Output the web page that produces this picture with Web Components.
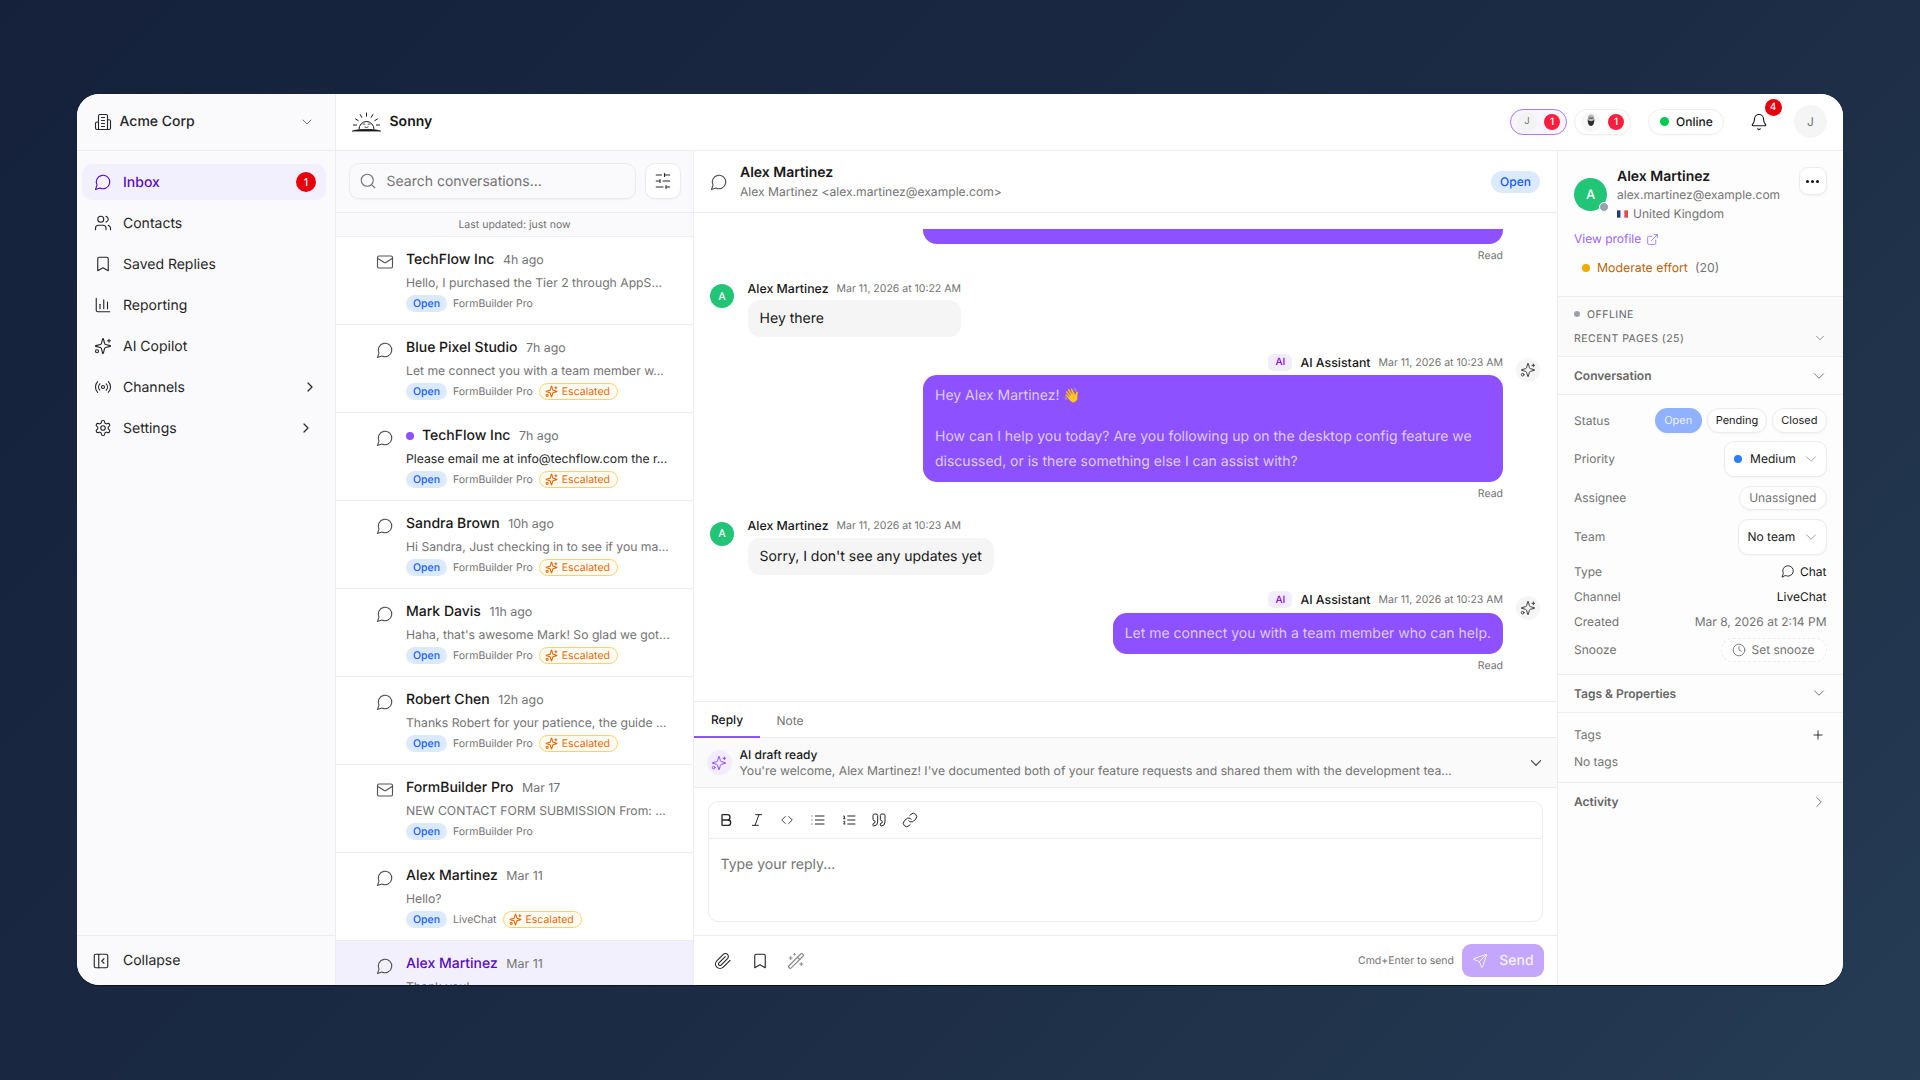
<!DOCTYPE html>
<html>
<head>
<meta charset="utf-8">
<title>Sonny</title>
<style>
    html, body { margin: 0; height: 100%; }
    body {
        box-sizing: border-box;
        height: 1080px;
        padding: 94px 77px 95px;
        overflow: hidden;
        font-family: Inter, "Liberation Sans", sans-serif;
        text-rendering: geometricPrecision;
        color: #171717;
        background: linear-gradient(135deg, #15213a 0%, #1b2b43 55%, #253c54 100%);
    }
</style>
</head>
<body>
<app-shell>
    <side-nav slot="nav"></side-nav>
    <top-bar slot="top"></top-bar>
    <conv-list slot="list"></conv-list>
    <chat-panel slot="chat"></chat-panel>
    <detail-panel slot="detail"></detail-panel>
</app-shell>

<script>
const ICONS = {
    chat: '<path d="M7.9 20A9 9 0 1 0 4 16.1L2 22Z"/>',
    mail: '<rect x="2" y="4" width="20" height="16" rx="2"/><path d="m22 7-8.97 5.7a1.94 1.94 0 0 1-2.06 0L2 7"/>',
    building: '<path d="M6 22V4a2 2 0 0 1 2-2h8a2 2 0 0 1 2 2v18Z"/><path d="M6 12H4a2 2 0 0 0-2 2v6a2 2 0 0 0 2 2h2"/><path d="M18 9h2a2 2 0 0 1 2 2v9a2 2 0 0 1-2 2h-2"/><path d="M10 6h4M10 10h4M10 14h4M10 18h4"/>',
    users: '<path d="M16 21v-2a4 4 0 0 0-4-4H6a4 4 0 0 0-4 4v2"/><circle cx="9" cy="7" r="4"/><path d="M22 21v-2a4 4 0 0 0-3-3.87"/><path d="M16 3.13a4 4 0 0 1 0 7.75"/>',
    bookmark: '<path d="m19 21-7-4-7 4V5a2 2 0 0 1 2-2h10a2 2 0 0 1 2 2v16z"/>',
    chart: '<path d="M3 3v16a2 2 0 0 0 2 2h16"/><path d="M8 17v-6"/><path d="M13 17V5"/><path d="M18 17v-9"/>',
    sparkles: '<path d="M9.937 15.5A2 2 0 0 0 8.5 14.063l-6.135-1.582a.5.5 0 0 1 0-.962L8.5 9.936A2 2 0 0 0 9.937 8.5l1.582-6.135a.5.5 0 0 1 .963 0L14.063 8.5A2 2 0 0 0 15.5 9.937l6.135 1.581a.5.5 0 0 1 0 .964L15.5 14.063a2 2 0 0 0-1.437 1.437l-1.582 6.135a.5.5 0 0 1-.963 0z"/><path d="M20 3v4M22 5h-4"/><circle cx="4" cy="19" r="2"/>',
    radio: '<path d="M4.9 19.1C1 15.2 1 8.8 4.9 4.9"/><path d="M7.8 16.2c-2.3-2.3-2.3-6.1 0-8.5"/><circle cx="12" cy="12" r="2"/><path d="M16.2 7.8c2.3 2.3 2.3 6.1 0 8.5"/><path d="M19.1 4.9C23 8.8 23 15.1 19.1 19"/>',
    settings: '<path d="M12.22 2h-.44a2 2 0 0 0-2 2v.18a2 2 0 0 1-1 1.73l-.43.25a2 2 0 0 1-2 0l-.15-.08a2 2 0 0 0-2.73.73l-.22.38a2 2 0 0 0 .73 2.73l.15.1a2 2 0 0 1 1 1.72v.51a2 2 0 0 1-1 1.74l-.15.09a2 2 0 0 0-.73 2.73l.22.38a2 2 0 0 0 2.73.73l.15-.08a2 2 0 0 1 2 0l.43.25a2 2 0 0 1 1 1.73V20a2 2 0 0 0 2 2h.44a2 2 0 0 0 2-2v-.18a2 2 0 0 1 1-1.73l.43-.25a2 2 0 0 1 2 0l.15.08a2 2 0 0 0 2.73-.73l.22-.39a2 2 0 0 0-.73-2.73l-.15-.08a2 2 0 0 1-1-1.74v-.5a2 2 0 0 1 1-1.74l.15-.09a2 2 0 0 0 .73-2.73l-.22-.38a2 2 0 0 0-2.73-.73l-.15.08a2 2 0 0 1-2 0l-.43-.25a2 2 0 0 1-1-1.73V4a2 2 0 0 0-2-2z"/><circle cx="12" cy="12" r="3"/>',
    right: '<path d="m9 18 6-6-6-6"/>',
    down: '<path d="m6 9 6 6 6-6"/>',
    search: '<circle cx="11" cy="11" r="8"/><path d="m21 21-4.3-4.3"/>',
    sliders: '<path d="M21 4h-7M10 4H3M21 12h-9M8 12H3M21 20h-5M12 20H3M14 2v4M8 10v4M16 18v4"/>',
    collapse: '<rect x="3" y="3" width="18" height="18" rx="2"/><path d="M9 3v18"/><path d="m16 15-3-3 3-3"/>',
    bold: '<path d="M6 12h9a4 4 0 0 1 0 8H7a1 1 0 0 1-1-1V5a1 1 0 0 1 1-1h7a4 4 0 0 1 0 8"/>',
    italic: '<path d="M19 4h-9M14 20H5M15 4 9 20"/>',
    code: '<path d="m9 6-6 6 6 6M15 6l6 6-6 6"/>',
    list: '<path d="M3 6h.01M3 12h.01M3 18h.01M8 6h13M8 12h13M8 18h13"/>',
    ordered: '<path d="M10 6h11M10 12h11M10 18h11M4 6h1v4M4 10h2M6 18H4c0-1 2-2 2-3s-1-1.5-2-1"/>',
    quote: '<path d="M16 3a2 2 0 0 0-2 2v6a2 2 0 0 0 2 2 1 1 0 0 1 1 1v1a2 2 0 0 1-2 2 1 1 0 0 0-1 1v2a1 1 0 0 0 1 1 6 6 0 0 0 6-6V5a2 2 0 0 0-2-2z"/><path d="M5 3a2 2 0 0 0-2 2v6a2 2 0 0 0 2 2 1 1 0 0 1 1 1v1a2 2 0 0 1-2 2 1 1 0 0 0-1 1v2a1 1 0 0 0 1 1 6 6 0 0 0 6-6V5a2 2 0 0 0-2-2z"/>',
    link: '<path d="M10 13a5 5 0 0 0 7.54.54l3-3a5 5 0 0 0-7.07-7.07l-1.72 1.71"/><path d="M14 11a5 5 0 0 0-7.54-.54l-3 3a5 5 0 0 0 7.07 7.07l1.71-1.71"/>',
    clip: '<path d="m21.44 11.05-9.19 9.19a6 6 0 0 1-8.49-8.49l8.57-8.57A4 4 0 1 1 18 8.84l-8.59 8.57a2 2 0 0 1-2.83-2.83l8.49-8.48"/>',
    wand: '<path d="m21.64 3.64-1.28-1.28a1.21 1.21 0 0 0-1.72 0L2.36 18.64a1.21 1.21 0 0 0 0 1.72l1.28 1.28a1.2 1.2 0 0 0 1.72 0L21.64 5.36a1.2 1.2 0 0 0 0-1.72"/><path d="m14 7 3 3M5 6v4M19 14v4M10 2v2M7 8H3M21 16h-4M11 3H9"/>',
    send: '<path d="M14.536 21.686a.5.5 0 0 0 .937-.024l6.5-19a.496.496 0 0 0-.635-.635l-19 6.5a.5.5 0 0 0-.024.937l7.93 3.18a2 2 0 0 1 1.112 1.11z"/><path d="m21.854 2.147-10.94 10.939"/>',
    bell: '<path d="M10.268 21a2 2 0 0 0 3.464 0"/><path d="M3.262 15.326A1 1 0 0 0 4 17h16a1 1 0 0 0 .74-1.673C19.41 13.956 18 12.499 18 8A6 6 0 0 0 6 8c0 4.499-1.411 5.956-2.738 7.326"/>',
    external: '<path d="M15 3h6v6M10 14 21 3M18 13v6a2 2 0 0 1-2 2H5a2 2 0 0 1-2-2V8a2 2 0 0 1 2-2h6"/>',
    clock: '<circle cx="12" cy="12" r="10"/><path d="M12 6v6l4 2"/>',
    plus: '<path d="M5 12h14M12 5v14"/>'
};

function define(tag, render) {
    customElements.define(tag, class extends HTMLElement {
        connectedCallback() {
            if (this.shadowRoot) return;
            this.attachShadow({mode: 'open'});
            this.shadowRoot.innerHTML = render(this);
        }
    });
}

define('ui-icon', (el) => {
    const size = el.getAttribute('size') || 18;
    const sw = el.getAttribute('sw') || 1.5;
    return `<style>:host{display:inline-flex;flex:none}svg{display:block}</style>
    <svg width="${size}" height="${size}" viewBox="0 0 24 24" fill="none" stroke="currentColor" stroke-width="${sw}" stroke-linecap="round" stroke-linejoin="round">${ICONS[el.getAttribute('name')]}</svg>`;
});

define('app-shell', () => `
    <style>
        :host {
            display: grid;
            grid-template-columns: 259px 1fr;
            grid-template-rows: 57px 1fr;
            width: 1766px;
            height: 891px;
            border-radius: 22px;
            overflow: hidden;
            background: #fff;
            box-shadow: 0 1px 0 #0b1220;
        }
        .nav { grid-row: 1 / 3; min-height: 0; display: flex; }
        .main { display: grid; grid-template-columns: 357px 864px 286px; min-height: 0; }
    </style>
    <div class="nav"><slot name="nav"></slot></div>
    <slot name="top"></slot>
    <div class="main">
        <slot name="list"></slot>
        <slot name="chat"></slot>
        <slot name="detail"></slot>
    </div>
`);

define('nav-item', (el) => {
    const active = el.hasAttribute('active');
    const offset = el.getAttribute('chev-offset') || 0;
    return `
    <style>
        :host { display: block; }
        .item {
            height: 36px;
            box-sizing: border-box;
            display: flex;
            align-items: center;
            gap: 11.5px;
            padding: 0 10px 0 11.5px;
            border-radius: 10px;
            font-size: 14px;
            font-weight: ${active ? 500 : 400};
            color: ${active ? '#5a0cc0' : '#262626'};
            background: ${active ? '#f3f0fd' : 'transparent'};
        }
        .label { flex: 1; }
        .badge {
            width: 20px; height: 20px; border-radius: 50%;
            background: #e7000b; color: #fff;
            font-size: 10.5px; display: flex; align-items: center; justify-content: center;
        }
        ui-icon.chev { margin-right: ${-2 + Number(offset)}px; }
    </style>
    <div class="item">
        <ui-icon name="${el.getAttribute('icon')}"></ui-icon>
        <span class="label"><slot></slot></span>
        ${el.hasAttribute('badge') ? `<span class="badge">${el.getAttribute('badge')}</span>` : ''}
        ${el.hasAttribute('chev') ? '<ui-icon class="chev" name="right" size="16" sw="1.8"></ui-icon>' : ''}
    </div>`;
});

define('side-nav', () => `
    <style>
        :host {
            width: 259px;
            box-sizing: border-box;
            display: flex;
            flex-direction: column;
            background: #fafafc;
            border-right: 1px solid #ededed;
        }
        .org {
            height: 57px; box-sizing: border-box; flex: none;
            display: flex; align-items: center; gap: 8px;
            padding: 0 20px 1px 16.5px;
            border-bottom: 1px solid #ededed;
            font-size: 14px; font-weight: 500; color: #262626;
        }
        .org span { flex: 1; }
        .org .chev { color: #737373; }
        nav { display: flex; flex-direction: column; gap: 5px; padding: 13px 9px 0 5px; }
        .foot {
            margin-top: auto; height: 50px; box-sizing: border-box;
            display: flex; align-items: center; gap: 13px;
            padding-left: 15px;
            border-top: 1px solid #ededed;
            font-size: 14px; color: #262626;
        }
    </style>
    <div class="org">
        <ui-icon name="building"></ui-icon>
        <span>Acme Corp</span>
        <ui-icon class="chev" name="down" size="16"></ui-icon>
    </div>
    <nav>
        <nav-item icon="chat" active badge="1">Inbox</nav-item>
        <nav-item icon="users">Contacts</nav-item>
        <nav-item icon="bookmark">Saved Replies</nav-item>
        <nav-item icon="chart">Reporting</nav-item>
        <nav-item icon="sparkles">AI Copilot</nav-item>
        <nav-item icon="radio" chev chev-offset="0">Channels</nav-item>
        <nav-item icon="settings" chev chev-offset="4">Settings</nav-item>
    </nav>
    <div class="foot">
        <ui-icon name="collapse"></ui-icon>
        <span>Collapse</span>
    </div>
`);

define('top-bar', () => `
    <style>
        :host {
            display: flex; align-items: center;
            box-sizing: border-box; height: 57px;
            padding: 0 16px 1px 16px;
            border-bottom: 1px solid #ededed;
            background: #fff;
        }
        .brand { font-size: 14px; font-weight: 600; margin-left: 8.5px; flex: 1; }
        .pill {
            height: 26px; box-sizing: border-box;
            display: flex; align-items: center;
            border: 1px solid #eeeeee; border-radius: 13px;
            box-shadow: 0 1px 2px rgba(0,0,0,.03);
        }
        .agent { width: 57px; padding-left: 6px; gap: 7px; margin-right: 7px; }
        .agent.on { border-color: #a57dfb; background: #f8f5ff; }
        .avatar {
            width: 20px; height: 20px; border-radius: 50%;
            background: #f3f3f3; color: #737373; font-size: 9.5px;
            display: flex; align-items: center; justify-content: center; flex: none;
        }
        .count {
            width: 16px; height: 16px; border-radius: 50%;
            background: #f81e3c; color: #fff; font-size: 10px; font-weight: 500;
            display: flex; align-items: center; justify-content: center; flex: none;
        }
        .online { width: 76px; margin-left: 10px; padding-left: 11px; gap: 7px; font-size: 12px; font-weight: 500; }
        .online i { width: 9px; height: 9px; border-radius: 50%; background: #00c950; }
        .bell { position: relative; display: flex; margin: 0 26px; }
        .bell b {
            position: absolute; left: 14.5px; top: -14px;
            width: 17px; height: 17px; border-radius: 50%;
            background: #e7000b; color: #fff; font-size: 10px; font-weight: 500;
            display: flex; align-items: center; justify-content: center;
        }
        .me {
            width: 33px; height: 33px; border-radius: 50%;
            background: #f5f5f5; color: #737373; font-size: 12px;
            display: flex; align-items: center; justify-content: center;
        }
    </style>
    <svg width="29" height="20" viewBox="0 0 29 20" fill="none" stroke="#171717" stroke-width="1" stroke-linecap="round">
        <path d="M7 17a7.5 7.5 0 0 1 15 0"/>
        <path d="M14.5 1v3.2M8.2 2.6l1.6 2.8M20.8 2.6l-1.6 2.8M3.6 7l2.6 1.6M25.4 7l-2.6 1.6M1.5 13h3M24.5 13h3"/>
        <path d="M11 12.2q1-.9 2 0M16 12.2q1-.9 2 0M12.8 15q1.7 1.2 3.4 0" stroke-width=".8"/>
        <path d="M.5 19c4-2.2 24-2.2 28 0z" fill="#171717" stroke-width=".6"/>
    </svg>
    <span class="brand">Sonny</span>
    <div class="pill agent on"><span class="avatar">J</span><span class="count">1</span></div>
    <div class="pill agent">
        <span class="avatar" style="background:#f7f7f7">
            <svg width="12" height="15" viewBox="0 0 12 15"><ellipse cx="6" cy="4" rx="3.2" ry="3.4" fill="#b9b9b9"/><path d="M2.6 5c0 4 1 7 3.4 7s3.4-3 3.4-7C8 8 4 8 2.6 5z" fill="#2b2b2b"/><rect x="3.6" y="3.6" width="4.8" height="1" fill="#444"/></svg>
        </span>
        <span class="count">1</span>
    </div>
    <div class="pill online"><i></i>Online</div>
    <div class="bell"><ui-icon name="bell"></ui-icon><b>4</b></div>
    <div class="me">J</div>
`);

define('status-chip', () => `
    <style>
        :host {
            display: inline-flex; align-items: center; justify-content: center;
            height: 17px; width: 41px; border-radius: 9px;
            background: #dbeafe; color: #155dfc;
            font-size: 10.5px; font-weight: 500; flex: none;
        }
    </style>
    <slot></slot>
`);

define('escalated-chip', () => `
    <style>
        :host {
            display: inline-flex; align-items: center; gap: 4px;
            box-sizing: border-box;
            height: 17px; width: 79px; padding: 0 0 0 5px; border-radius: 9px;
            border: 1px solid #fdd163; background: #fffdf5; color: #e86a00;
            font-size: 10.5px; font-weight: 400; flex: none;
        }
    </style>
    <ui-icon name="sparkles" size="13" sw="2"></ui-icon><slot></slot>
`);

define('conv-item', (el) => {
    const selected = el.hasAttribute('selected');
    const unread = el.hasAttribute('unread');
    return `
    <style>
        :host {
            display: flex; flex: none; box-sizing: border-box;
            height: 88px; padding: 13.5px 0 0 40px;
            border-bottom: ${selected ? 0 : 1}px solid #ededed;
            background: ${selected ? '#f3f0fd' : '#fff'};
        }
        .ic { color: #525252; margin: 2.5px 12px 0 0; }
        .body { min-width: 0; flex: 1; }
        .head { display: flex; align-items: center; height: 18px; gap: 8.5px; }
        .dot { width: 8px; height: 8px; border-radius: 50%; background: #8e51ff; margin-right: -.5px; }
        .name { font-size: 14px; font-weight: 500; color: ${selected ? '#5a0cc0' : '#171717'}; }
        .time { font-size: 12.4px; color: #737373; }
        .preview { height: 16px; line-height: 16px; margin-top: 6.5px; font-size: 12.2px; white-space: nowrap; color: ${unread ? '#262626' : '#737373'}; }
        .tags { display: flex; align-items: center; gap: 6px; margin-top: 4px; height: 17px; }
        .src { font-size: 10.5px; color: #737373; }
    </style>
    <ui-icon class="ic" name="${el.getAttribute('icon') || 'chat'}"></ui-icon>
    <div class="body">
        <div class="head">
            ${unread ? '<span class="dot"></span>' : ''}
            <span class="name">${el.getAttribute('name')}</span>
            <span class="time">${el.getAttribute('time')}</span>
        </div>
        <div class="preview"><slot></slot></div>
        ${el.hasAttribute('source') ? `<div class="tags">
            <status-chip>Open</status-chip>
            <span class="src">${el.getAttribute('source')}</span>
            ${el.hasAttribute('escalated') ? '<escalated-chip>Escalated</escalated-chip>' : ''}
        </div>` : ''}
    </div>`;
});

define('conv-list', () => `
    <style>
        :host { display: flex; flex-direction: column; min-height: 0; overflow: hidden; background: #fff; }
        .search {
            flex: none; height: 62px; box-sizing: border-box;
            display: flex; gap: 9px; padding: 12px 12px 0 12.5px;
            background: #fafafc; border-bottom: 1px solid #ededed;
        }
        .box, .filter {
            height: 36px; box-sizing: border-box;
            border: 1px solid #ececec; border-radius: 10px;
            box-shadow: 0 1px 2px rgba(0,0,0,.04);
            display: flex; align-items: center;
        }
        .box {
            flex: 1; gap: 10px; padding-left: 9px;
            background: #fafafc; color: #737373; font-size: 14px;
        }
        .filter { width: 36px; justify-content: center; background: #fff; color: #262626; flex: none; }
        .updated {
            flex: none; height: 24px; box-sizing: border-box;
            display: flex; align-items: center; justify-content: center;
            font-size: 10.5px; color: #737373;
            background: #fafafc; border-bottom: 1px solid #ededed;
        }
    </style>
    <div class="search">
        <div class="box"><ui-icon name="search"></ui-icon>Search conversations...</div>
        <div class="filter"><ui-icon name="sliders"></ui-icon></div>
    </div>
    <div class="updated">Last updated: just now</div>
    <conv-item icon="mail" name="TechFlow Inc" time="4h ago" source="FormBuilder Pro">Hello, I purchased the Tier 2 through AppS...</conv-item>
    <conv-item name="Blue Pixel Studio" time="7h ago" source="FormBuilder Pro" escalated>Let me connect you with a team member w...</conv-item>
    <conv-item name="TechFlow Inc" time="7h ago" source="FormBuilder Pro" escalated unread>Please email me at info@techflow.com the r...</conv-item>
    <conv-item name="Sandra Brown" time="10h ago" source="FormBuilder Pro" escalated>Hi Sandra, Just checking in to see if you ma...</conv-item>
    <conv-item name="Mark Davis" time="11h ago" source="FormBuilder Pro" escalated>Haha, that's awesome Mark! So glad we got...</conv-item>
    <conv-item name="Robert Chen" time="12h ago" source="FormBuilder Pro" escalated>Thanks Robert for your patience, the guide ...</conv-item>
    <conv-item icon="mail" name="FormBuilder Pro" time="Mar 17" source="FormBuilder Pro">NEW CONTACT FORM SUBMISSION From: ...</conv-item>
    <conv-item name="Alex Martinez" time="Mar 11" source="LiveChat" escalated>Hello?</conv-item>
    <conv-item name="Alex Martinez" time="Mar 11" selected>Thank you!</conv-item>
`);

define('user-msg', (el) => `
    <style>
        :host { display: flex; gap: 13.6px; margin-top: 17px; }
        .avatar {
            width: 24px; height: 24px; margin-top: 4px; border-radius: 50%;
            background: #22c476; color: #fff; font-size: 10.5px; font-weight: 500;
            display: flex; align-items: center; justify-content: center; flex: none;
        }
        .col { display: flex; flex-direction: column; width: fit-content; }
        .meta { height: 16px; display: flex; align-items: center; gap: 8px; white-space: nowrap; }
        .name { font-size: 12.35px; font-weight: 500; }
        .date { font-size: 10.5px; color: #737373; }
        .bubble {
            margin-top: 4px; padding: 0 12px; height: 37px; line-height: 37px;
            background: #f5f5f5; border-radius: 12px; font-size: 14px; color: #171717;
        }
    </style>
    <div class="avatar">A</div>
    <div class="col">
        <div class="meta"><span class="name">Alex Martinez</span><span class="date">${el.getAttribute('date')}</span></div>
        <div class="bubble"><slot></slot></div>
    </div>
`);

define('ai-msg', (el) => `
    <style>
        :host { display: flex; justify-content: flex-end; margin-top: 16px; }
        .col { display: flex; flex-direction: column; align-items: flex-end; }
        .meta { height: 18px; display: flex; align-items: center; gap: 8px; white-space: nowrap; }
        .ai {
            width: 24px; height: 17px; border-radius: 6px; background: #f3ecff; color: #8200db;
            font-size: 10px; font-weight: 500; display: flex; align-items: center; justify-content: center;
        }
        .name { font-size: 12.35px; font-weight: 500; }
        .date { font-size: 10.5px; color: #737373; }
        .bubble {
            margin-top: 4px; padding: 9.25px 12px 7.25px; max-width: 556px; width: ${el.hasAttribute('wide') ? '556px' : 'auto'};
            background: #8e51ff; border-radius: 14px;
            color: #dccbff; font-size: 14px; line-height: 24.5px;
        }
        .read { margin-top: 5px; height: 14px; line-height: 14px; font-size: 10.5px; color: #737373; }
        .spark {
            width: 24px; height: 24px; margin: 5px 0 0 13px; border-radius: 50%;
            background: #f5f5f5; color: #404040;
            display: flex; align-items: center; justify-content: center; flex: none;
        }
    </style>
    <div class="col">
        <div class="meta"><span class="ai">AI</span><span class="name">AI Assistant</span><span class="date">${el.getAttribute('date')}</span></div>
        <div class="bubble"><slot></slot></div>
        <div class="read">Read</div>
    </div>
    <div class="spark"><ui-icon name="sparkles" size="16"></ui-icon></div>
`);

define('chat-panel', () => `
    <style>
        :host { display: flex; flex-direction: column; min-height: 0; border-left: 1px solid #ededed; box-sizing: border-box; background: #fff; overflow: hidden; }
        .head {
            flex: none; height: 62px; box-sizing: border-box;
            display: flex; align-items: center; gap: 12.5px;
            padding: 0 17px 0 15.5px;
            border-bottom: 1px solid #ededed;
        }
        .head ui-icon { color: #525252; }
        .who { flex: 1; }
        .who b { display: block; font-size: 14px; font-weight: 600; line-height: 17px; }
        .who span { display: block; margin-top: 3px; font-size: 12.1px; line-height: 16px; color: #737373; }
        .open { height: 22px; padding: 0 9px; border-radius: 11px; background: #dbeafe; color: #155dfc; font-size: 12px; font-weight: 500; display: flex; align-items: center; }
        .msgs { flex: 1; min-height: 0; padding: 16px 17px 0 16px; overflow: hidden; }
        .cut { margin-left: auto; margin-right: 37px; width: 580px; height: 15px; background: #8e51ff; border-radius: 0 0 14px 14px; }
        .cutread { margin-right: 37px; margin-top: 5px; height: 14px; line-height: 14px; text-align: right; font-size: 10.5px; color: #737373; }
        .msgs p { margin: 0 0 16.5px; }
        .msgs p:last-child { margin: 0; }
        .composer { flex: none; height: 284px; box-sizing: border-box; border-top: 1px solid #ededed; display: flex; flex-direction: column; }
        .tabs { flex: none; height: 36px; box-sizing: border-box; display: flex; align-items: stretch; border-bottom: 1px solid #ededed; font-size: 12px; }
        .tab { display: flex; align-items: center; padding: 0 16.5px; margin-bottom: -1px; color: #737373; }
        .tab.on { color: #171717; font-weight: 500; border-bottom: 2px solid #8e51ff; width: 66px; box-sizing: border-box; padding: 0 0 0 17px; }
        .draft {
            flex: none; height: 50px; box-sizing: border-box;
            display: flex; align-items: center; gap: 8px;
            padding: 0 12px 0 12.5px;
            background: #fafafa; border-bottom: 1px solid #ededed;
        }
        .draft .ic { width: 25px; height: 25px; border-radius: 50%; background: #f3ecff; color: #8e51ff; display: flex; align-items: center; justify-content: center; flex: none; }
        .draft .txt { flex: 1; min-width: 0; font-size: 12px; line-height: 16.5px; padding-top: 1px; }
        .draft b { display: block; font-weight: 500; }
        .draft span { display: block; color: #737373; white-space: nowrap; font-size: 12.2px; }
        .draft ui-icon.chev { color: #525252; }
        .editor {
            flex: none; height: 121px; box-sizing: border-box; margin: 13px 14px 13px 13.5px;
            border: 1px solid #ececec; border-radius: 10px;
        }
        .tools { height: 37px; box-sizing: border-box; display: flex; align-items: center; gap: 6.7px; padding-left: 5.5px; border-bottom: 1px solid #ededed; color: #262626; }
        .tools span { width: 24px; display: flex; justify-content: center; }
        .ph { padding: 17px 12px 0; font-size: 14px; line-height: 17px; color: #737373; }
        .foot { flex: none; height: 50px; box-sizing: border-box; border-top: 1px solid #ededed; display: flex; align-items: center; padding: 0 13px 0 17px; }
        .foot .act { width: 24px; display: flex; justify-content: center; margin-right: 12.7px; color: #262626; }
        .foot .hint { margin-left: auto; font-size: 10.5px; color: #737373; margin-right: 8px; }
        .send {
            width: 82px; height: 33px; border-radius: 9px; background: #c4a7fc; color: #f5f0ff;
            display: flex; align-items: center; justify-content: center; gap: 11px;
            font-size: 14px; font-weight: 500;
        }
    </style>
    <div class="head">
        <ui-icon name="chat"></ui-icon>
        <div class="who"><b>Alex Martinez</b><span>Alex Martinez &lt;alex.martinez@example.com&gt;</span></div>
        <div class="open">Open</div>
    </div>
    <div class="msgs">
        <div class="cut"></div>
        <div class="cutread">Read</div>
        <user-msg date="Mar 11, 2026 at 10:22 AM">Hey there</user-msg>
        <ai-msg date="Mar 11, 2026 at 10:23 AM" wide>
            <p>Hey Alex Martinez! <span>👋</span></p>
            <p>How can I help you today? Are you following up on the desktop config feature we discussed, or is there something else I can assist with?</p>
        </ai-msg>
        <user-msg date="Mar 11, 2026 at 10:23 AM">Sorry, I don't see any updates yet</user-msg>
        <ai-msg date="Mar 11, 2026 at 10:23 AM">Let me connect you with a team member who can help.</ai-msg>
    </div>
    <div class="composer">
        <div class="tabs"><div class="tab on">Reply</div><div class="tab">Note</div></div>
        <div class="draft">
            <div class="ic"><ui-icon name="sparkles" size="16"></ui-icon></div>
            <div class="txt"><b>AI draft ready</b><span>You're welcome, Alex Martinez! I've documented both of your feature requests and shared them with the development tea...</span></div>
            <ui-icon class="chev" name="down" sw="1.6"></ui-icon>
        </div>
        <div class="editor">
            <div class="tools">
                <span><ui-icon name="bold" size="16" sw="2"></ui-icon></span>
                <span><ui-icon name="italic" size="16"></ui-icon></span>
                <span><ui-icon name="code" size="14"></ui-icon></span>
                <span><ui-icon name="list" size="16"></ui-icon></span>
                <span><ui-icon name="ordered" size="16"></ui-icon></span>
                <span><ui-icon name="quote" size="16"></ui-icon></span>
                <span><ui-icon name="link" size="16"></ui-icon></span>
            </div>
            <div class="ph">Type your reply...</div>
        </div>
        <div class="foot">
            <span class="act"><ui-icon name="clip"></ui-icon></span>
            <span class="act"><ui-icon name="bookmark"></ui-icon></span>
            <span class="act" style="color:#8a8a8a"><ui-icon name="wand"></ui-icon></span>
            <span class="hint">Cmd+Enter to send</span>
            <div class="send"><ui-icon name="send" size="16"></ui-icon>Send</div>
        </div>
    </div>
`);

define('detail-row', (el) => `
    <style>
        :host {
            display: flex; align-items: center; justify-content: space-between;
            height: ${el.getAttribute('h') || 17}px; flex: none;
            font-size: 12px; color: #171717;
        }
        .lab { color: #737373; }
        .val { display: flex; align-items: center; gap: 5px; }
    </style>
    <span class="lab">${el.getAttribute('label')}</span>
    <span class="val"><slot></slot></span>
`);

define('section-head', (el) => `
    <style>
        :host {
            display: flex; align-items: center; justify-content: space-between;
            box-sizing: border-box; height: 38px; padding: 0 15px 0 16px;
            border-bottom: ${el.hasAttribute('last') ? 0 : 1}px solid #ededed;
            font-size: 12px; font-weight: 600; color: #666;
        }
        ui-icon { color: #737373; }
    </style>
    <span><slot></slot></span>
    <ui-icon name="${el.getAttribute('chev') || 'down'}" sw="1.3"></ui-icon>
`);

define('pick-chip', (el) => {
    const h = el.getAttribute('h') || 24;
    const kind = el.getAttribute('kind');
    const w = el.getAttribute('w');
    return `
    <style>
        :host {
            display: inline-flex; align-items: center; justify-content: ${w && !el.hasAttribute('start') ? 'center' : 'flex-start'}; gap: 5px;
            box-sizing: border-box; height: ${h}px; border-radius: ${h > 30 ? 10 : 12}px;
            border: 1px ${kind === 'dash' ? 'dashed' : 'solid'} #ececec;
            box-shadow: ${kind === 'dash' ? 'none' : '0 1px 2px rgba(0,0,0,.04)'};
            background: ${kind === 'on' ? '#8fb1ff' : '#fff'};
            color: ${kind === 'on' ? '#eef3ff' : (kind === 'muted' || kind === 'dash' ? '#737373' : '#171717')};
            padding: 0 ${el.getAttribute('pad') || 8}px;
            ${w ? `width: ${w}px;` : ''}
            flex: none;
            white-space: nowrap;
            font-size: ${el.hasAttribute('lg') ? 12 : 11}px;
            ${kind === 'on' ? 'border-color: #8fb1ff;' : ''}
        }
    </style>
    <slot></slot>`;
});

define('detail-panel', () => `
    <style>
        :host { display: flex; flex-direction: column; min-height: 0; border-left: 1px solid #ededed; background: #fdfdfd; overflow: hidden; }
        .profile { flex: none; height: 146px; box-sizing: border-box; padding: 17px 16.5px 0 16px; border-bottom: 1px solid #ededed; }
        .top { display: flex; gap: 10px; }
        .avatar { position: relative; width: 33px; height: 33px; margin-top: 10px; border-radius: 50%; background: #22c476; color: #fff; font-size: 13px; font-weight: 500; display: flex; align-items: center; justify-content: center; flex: none; }
        .avatar i { position: absolute; right: -2px; bottom: -1px; width: 8px; height: 8px; border-radius: 50%; background: #99a1af; border: 1.5px solid #fff; }
        .info { flex: 1; font-size: 12px; color: #737373; line-height: 18.5px; }
        .info b { display: block; font-size: 14px; font-weight: 600; color: #171717; line-height: 18px; }
        .info span { display: flex; align-items: center; gap: 5px; }
        .more { width: 28px; height: 28px; box-sizing: border-box; border: 1px solid #ececec; border-radius: 9px; background: #fff; box-shadow: 0 1px 2px rgba(0,0,0,.05); display: flex; align-items: center; justify-content: center; gap: 2px; margin-top: -1px; }
        .more i { width: 3px; height: 3px; border-radius: 50%; background: #171717; }
        .view { display: flex; align-items: center; gap: 5px; margin-top: 8px; color: #9b65ff; font-size: 12px; line-height: 16px; }
        .effort { display: flex; align-items: center; margin: 13px 0 0 8px; font-size: 12.3px; line-height: 16px; color: #737373; }
        .effort i { width: 8px; height: 8px; border-radius: 50%; background: #f0ab00; margin-right: 7px; }
        .effort em { font-style: normal; color: #b4690e; margin-right: 7px; }
        .pages { flex: none; height: 60px; box-sizing: border-box; padding: 9px 16px 0; background: #fafafa; border-bottom: 1px solid #ededed; font-size: 10.5px; letter-spacing: .5px; color: #666; }
        .pages div { display: flex; align-items: center; height: 16px; }
        .pages div + div { margin-top: 8px; justify-content: space-between; }
        .pages i { width: 6px; height: 6px; border-radius: 50%; background: #99a1af; margin-right: 7px; }
        .pages ui-icon { color: #737373; }
        .fields { flex: none; display: flex; flex-direction: column; gap: 8px; padding: 12.5px 16.5px 12px 16px; border-bottom: 1px solid #ededed; }
        .status { display: flex; gap: 5px; }
        .dot { width: 8px; height: 8px; border-radius: 50%; background: #2b7fff; margin-right: 3.6px; flex: none; }
        .chev { color: #a1a1a1; margin-left: 1.5px; }
        .tags { flex: none; height: 70px; box-sizing: border-box; padding: 14px 16.5px 0 16px; border-bottom: 1px solid #ededed; font-size: 12px; color: #737373; }
        .tags div { display: flex; justify-content: space-between; align-items: center; height: 16px; color: #737373; }
        .tags ui-icon { color: #171717; margin-right: 2px; }
        .tags p { margin: 11px 0 0; line-height: 16px; }
    </style>
    <div class="profile">
        <div class="top">
            <div class="avatar">A<i></i></div>
            <div class="info">
                <b>Alex Martinez</b>
                alex.martinez@example.com
                <span>
                    <svg width="11" height="8" viewBox="0 0 3 2"><rect width="1" height="2" fill="#1e3a8a"/><rect x="1" width="1" height="2" fill="#f5f5f5"/><rect x="2" width="1" height="2" fill="#e5484d"/></svg>
                    United Kingdom
                </span>
            </div>
            <div class="more"><i></i><i></i><i></i></div>
        </div>
        <div class="view">View profile <ui-icon name="external" size="13"></ui-icon></div>
        <div class="effort"><i></i><em>Moderate effort</em>(20)</div>
    </div>
    <div class="pages">
        <div><i></i>OFFLINE</div>
        <div>RECENT PAGES (25)<ui-icon name="down" size="14" sw="1.3"></ui-icon></div>
    </div>
    <section-head>Conversation</section-head>
    <div class="fields">
        <detail-row label="Status" h="25">
            <span class="status">
                <pick-chip h="25" kind="on" pad="8.5">Open</pick-chip>
                <pick-chip h="25" pad="8">Pending</pick-chip>
                <pick-chip h="25" pad="8">Closed</pick-chip>
            </span>
        </detail-row>
        <detail-row label="Priority" h="36">
            <pick-chip h="36" pad="9" w="103" start lg><span class="dot"></span>Medium <ui-icon class="chev" name="down" sw="1.3"></ui-icon></pick-chip>
        </detail-row>
        <detail-row label="Assignee" h="26"><pick-chip h="24" kind="muted" w="87.5" pad="0" lg>Unassigned</pick-chip></detail-row>
        <detail-row label="Team" h="36">
            <pick-chip h="36" pad="9" w="89" start lg>No team <ui-icon class="chev" name="down" sw="1.3"></ui-icon></pick-chip>
        </detail-row>
        <detail-row label="Type"><ui-icon name="chat" size="14"></ui-icon>Chat</detail-row>
        <detail-row label="Channel">LiveChat</detail-row>
        <detail-row label="Created"><span style="color:#737373">Mar 8, 2026 at 2:14 PM</span></detail-row>
        <detail-row label="Snooze" h="24"><pick-chip h="24" kind="dash" w="106" pad="0" lg><ui-icon name="clock" size="14"></ui-icon>Set snooze</pick-chip></detail-row>
    </div>
    <section-head>Tags &amp; Properties</section-head>
    <div class="tags">
        <div>Tags <ui-icon name="plus" size="14"></ui-icon></div>
        <p>No tags</p>
    </div>
    <section-head chev="right" last>Activity</section-head>
`);
</script>
</body>
</html>
